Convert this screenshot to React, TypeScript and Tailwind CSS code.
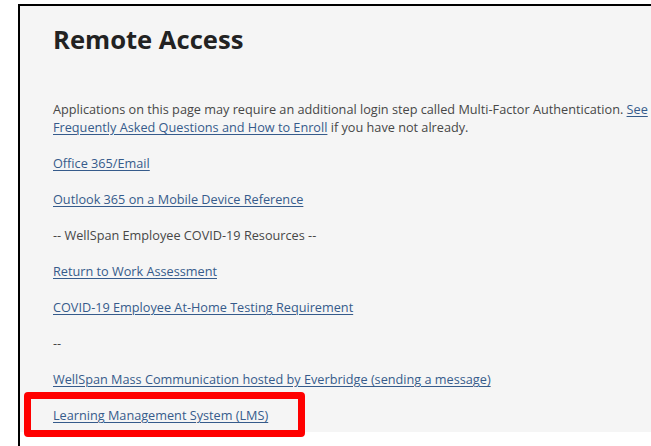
import React from "react";

const LINKS: { text: string; link: boolean }[] = [
  { text: "Office 365/Email", link: true },
  { text: "Outlook 365 on a Mobile Device Reference", link: true },
  { text: "-- WellSpan Employee COVID-19 Resources --", link: false },
  { text: "Return to Work Assessment", link: true },
  { text: "COVID-19 Employee At-Home Testing Requirement", link: true },
  { text: "--", link: false },
  { text: "WellSpan Mass Communication hosted by Everbridge (sending a message)", link: true },
  { text: "Learning Management System (LMS)", link: true },
];

const linkCls = "text-[#365b8b] underline underline-offset-2 decoration-[1px]";

export default function App() {
  return (
    <div className="relative h-[446px] w-[651px] overflow-hidden bg-white pl-[18px] pt-[4px] font-['Open_Sans',sans-serif]">
      <div className="h-full border-l-2 border-t-2 border-black">
        <div className="h-[426px] bg-[#f5f5f5] pl-[33px] pt-[18px] text-[12.7px] leading-[18px] text-[#474747]">
          <h1 className="text-[25.6px] font-bold leading-[31px] text-[#222]">Remote Access</h1>
          <p className="mt-[45px] whitespace-nowrap">
            Applications on this page may require an additional login step called Multi-Factor Authentication.{" "}
            <a className={linkCls}>See</a>
            <br />
            <a className={linkCls}>Frequently Asked Questions and How to Enroll</a> if you have not already.
          </p>
          {LINKS.map((l) => (
            <p key={l.text} className="mt-[18px] whitespace-nowrap">
              {l.link ? <a className={linkCls}>{l.text}</a> : l.text}
            </p>
          ))}
        </div>
      </div>
      {/* highlight around the LMS link */}
      <div className="absolute left-[24px] top-[392px] h-[45px] w-[281px] rounded-[4px] border-[7px] border-[#ff0000]" />
    </div>
  );
}
